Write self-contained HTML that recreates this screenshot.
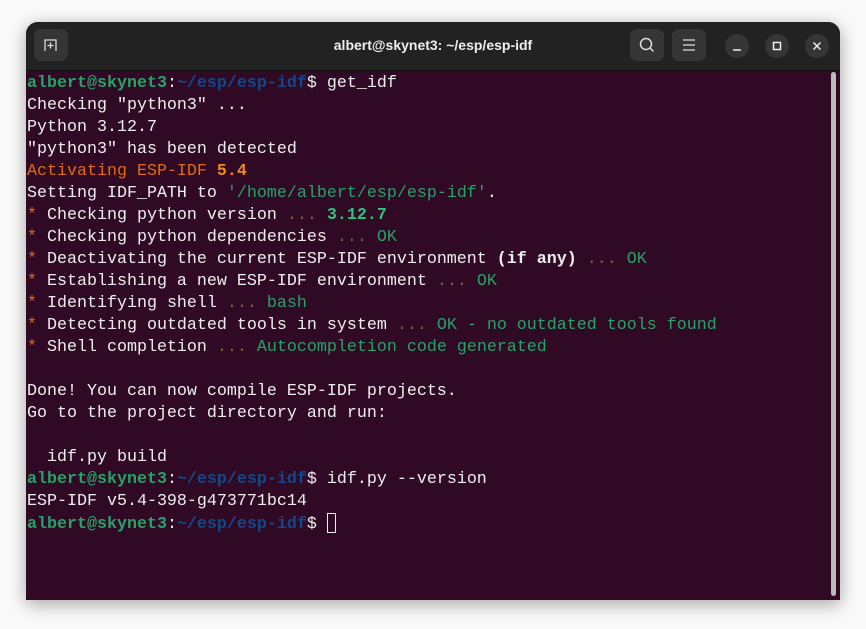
<!DOCTYPE html>
<html><head><meta charset="utf-8"><style>
html,body{margin:0;padding:0;background:#fafafa;width:866px;height:629px;overflow:hidden}
.win{position:absolute;left:26px;top:22px;width:814px;height:578px;border-radius:12px 12px 0 0;background:#300a24;box-shadow:0 4px 18px rgba(0,0,0,.35);overflow:hidden}
.hdr{position:absolute;left:0;top:0;width:814px;height:48px;background:#222;border-bottom:1px solid #111}
.btn{position:absolute;top:7px;width:34px;height:32px;border-radius:7px;background:#353535}
.cb{position:absolute;top:12px;width:24px;height:24px;border-radius:50%;background:#353535}
.title{position:absolute;left:0;right:0;top:0;text-align:center;color:#eee;font:bold 14px "Liberation Sans",sans-serif;line-height:47px}
.term{position:absolute;left:1px;top:51px;font-family:"Liberation Mono",monospace;font-size:16.67px;line-height:22px;color:#eee;white-space:pre}
.g{color:#26a269;font-weight:bold}.b{color:#12488b;font-weight:bold}
.o{color:#e26a10}.ob{color:#f08a1c;font-weight:bold}.gr{color:#26a269}.grb{color:#2ec27e;font-weight:bold}.d{color:#75693e}
.cur{display:inline-block;width:9px;height:20px;border:1px solid #eee;vertical-align:-5px;box-sizing:border-box}
.sb{position:absolute;left:805px;top:50px;width:5px;height:524px;border-radius:3px;background:#bbb}
</style></head><body>
<div class="win">
<div class="hdr">
<div class="btn" style="left:8px"><svg width="34" height="32"><path d="M11 22V11h11v11M16.5 13.5v6M13.5 16.5h6" stroke="#ddd" stroke-width="1.3" fill="none"/></svg></div>
<div class="title">albert@skynet3: ~/esp/esp-idf</div>
<div class="btn" style="left:604px"><svg width="34" height="32"><circle cx="16" cy="15" r="5.5" stroke="#ddd" stroke-width="1.5" fill="none"/><path d="M20 19l3.5 3.5" stroke="#ddd" stroke-width="1.5"/></svg></div>
<div class="btn" style="left:646px"><svg width="34" height="32"><path d="M11 11h12M11 16h12M11 21h12" stroke="#ddd" stroke-width="1.3"/></svg></div>
<div class="cb" style="left:699px"><svg width="24" height="24"><path d="M8 16h8" stroke="#eee" stroke-width="1.5"/></svg></div>
<div class="cb" style="left:739px"><svg width="24" height="24"><rect x="8.5" y="8.5" width="7" height="7" stroke="#eee" stroke-width="1.5" fill="none"/></svg></div>
<div class="cb" style="left:779px"><svg width="24" height="24"><path d="M8.5 8.5l7 7M15.5 8.5l-7 7" stroke="#eee" stroke-width="1.5"/></svg></div>
</div>
<div class="term"><span class="g">albert@skynet3</span>:<span class="b">~/esp/esp-idf</span>$ get_idf
Checking "python3" ...
Python 3.12.7
"python3" has been detected
<span class="o">Activating ESP-IDF </span><span class="ob">5.4</span>
Setting IDF_PATH to <span class="gr">'/home/albert/esp/esp-idf'</span>.
<span class="o">*</span> Checking python version <span class="d">...</span> <span class="grb">3.12.7</span>
<span class="o">*</span> Checking python dependencies <span class="d">...</span> <span class="gr">OK</span>
<span class="o">*</span> Deactivating the current ESP-IDF environment <b>(if any)</b> <span class="d">...</span> <span class="gr">OK</span>
<span class="o">*</span> Establishing a new ESP-IDF environment <span class="d">...</span> <span class="gr">OK</span>
<span class="o">*</span> Identifying shell <span class="d">...</span> <span class="gr">bash</span>
<span class="o">*</span> Detecting outdated tools in system <span class="d">...</span> <span class="gr">OK - no outdated tools found</span>
<span class="o">*</span> Shell completion <span class="d">...</span> <span class="gr">Autocompletion code generated</span>

Done! You can now compile ESP-IDF projects.
Go to the project directory and run:

  idf.py build
<span class="g">albert@skynet3</span>:<span class="b">~/esp/esp-idf</span>$ idf.py --version
ESP-IDF v5.4-398-g473771bc14
<span class="g">albert@skynet3</span>:<span class="b">~/esp/esp-idf</span>$ <span class="cur"></span></div>
<div class="sb"></div>
</div>
</body></html>
